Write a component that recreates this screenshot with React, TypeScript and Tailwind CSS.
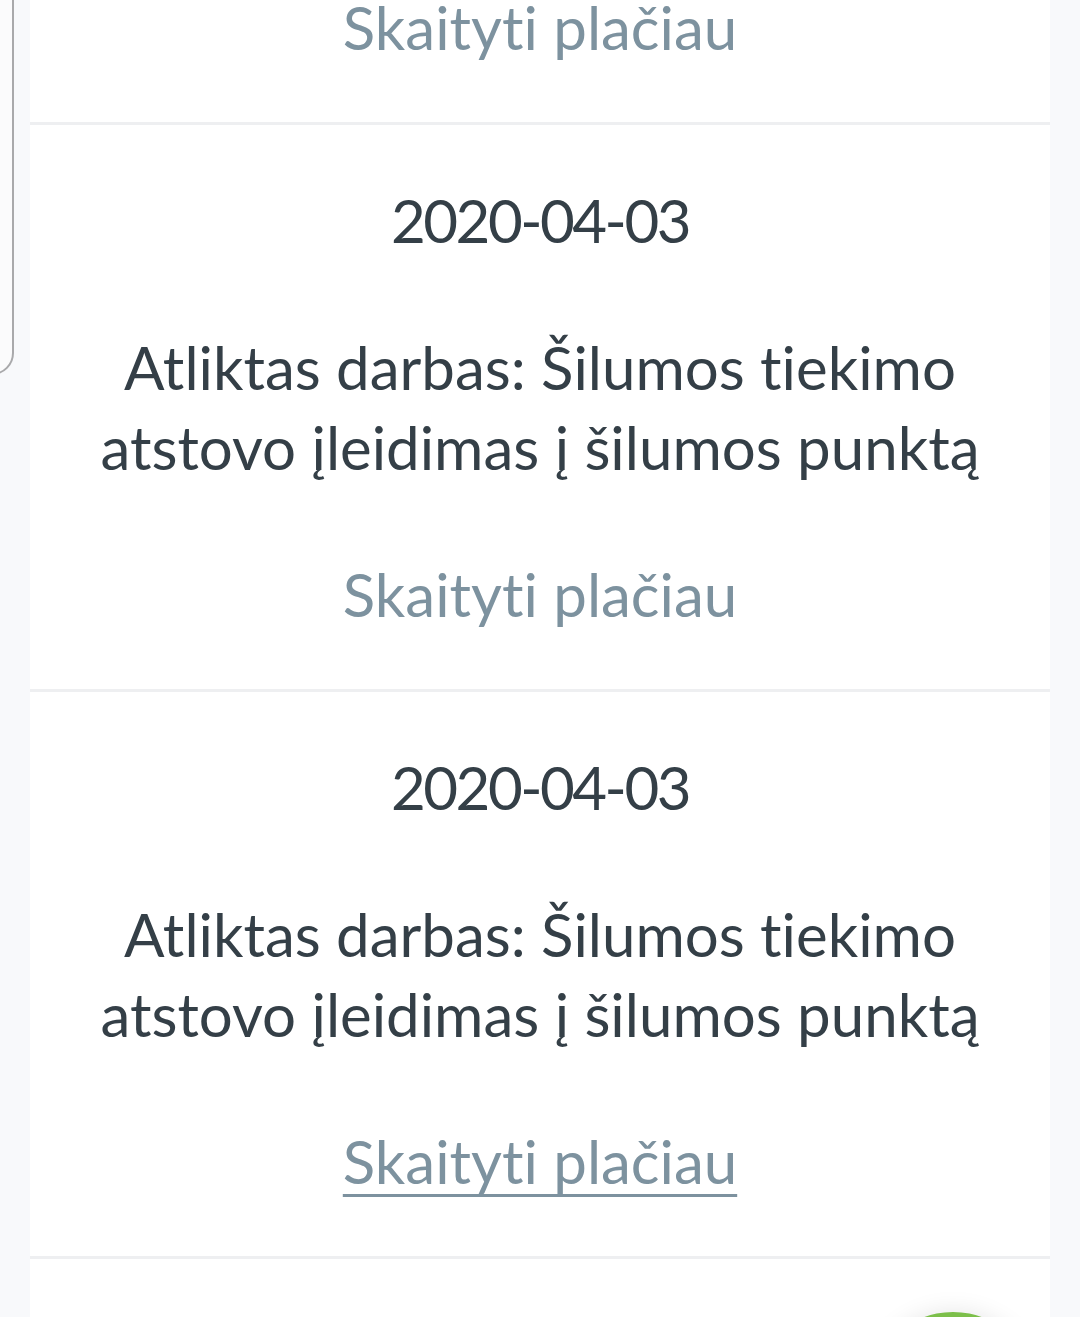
import React from "react";

const items = [
  { date: "2020-04-03", title: "Atliktas darbas: Šilumos tiekimo atstovo įleidimas į šilumos punktą" },
  { date: "2020-04-03", title: "Atliktas darbas: Šilumos tiekimo atstovo įleidimas į šilumos punktą" },
  { date: "2020-04-03", title: "Atliktas darbas: Šilumos tiekimo atstovo įleidimas į šilumos punktą" },
  { date: "2020-04-03", title: "Atliktas darbas: Šilumos tiekimo atstovo įleidimas į šilumos punktą" },
];

export default function App() {
  return (
    <div
      className="relative h-[1317px] w-[1080px] overflow-hidden bg-[#f8f9fb] [font-variant-ligatures:none]"
      style={{ fontFamily: "Lato, 'Noto Sans', sans-serif" }}
    >
      <div className="mt-[-442px] flex flex-col px-[30px]">
        {items.map((it, i) => (
          <div
            key={i}
            className="flex flex-col items-center gap-[67px] border-b-[3px] border-[#eeeff1] bg-white px-[60px] py-[55px] text-center"
          >
            <div className="text-[60px] leading-[80px] tracking-[-2.5px] text-[#343f47]">{it.date}</div>
            <div className="text-[60px] leading-[80px] text-[#343f47]">{it.title}</div>
            <a
              href="#"
              className={
                "text-[60px] leading-[80px] text-[#7d929f] " +
                (i === 2 ? "underline decoration-[3px] underline-offset-[10px]" : "no-underline")
              }
            >
              Skaityti plačiau
            </a>
          </div>
        ))}
      </div>
      <div className="absolute left-[-60px] top-[-20px] h-[395px] w-[74px] rounded-br-[22px] border-[2px] border-[#a9a9ab] bg-[#fbfbfc]" />
      <div className="absolute left-[869px] top-[1312px] h-[168px] w-[168px] rounded-full bg-[#7cbf4a] shadow-[0_0_24px_rgba(0,0,0,0.10)]" />
    </div>
  );
}
